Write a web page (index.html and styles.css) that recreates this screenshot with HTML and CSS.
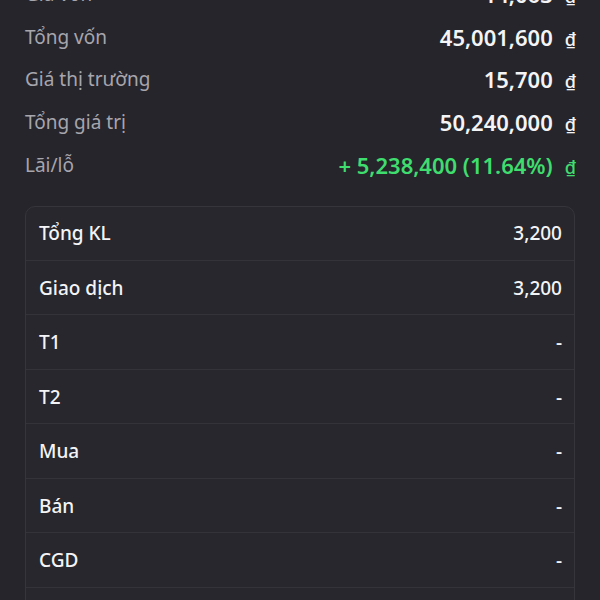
FILE: index.html
```html
<!DOCTYPE html>
<html lang="vi">
<head>
    <meta charset="UTF-8">
    <meta name="viewport" content="width=device-width, initial-scale=1.0">
    <title>Chi tiết vị thế</title>
    <link rel="stylesheet" href="styles.css">
</head>
<body>
    <!-- Summary -->
    <div class="summary">
        <div class="summary-row">
            <span class="label">Giá vốn</span>
            <span class="value">14,063<span class="cur">₫</span></span>
        </div>
        <div class="summary-row">
            <span class="label">Tổng vốn</span>
            <span class="value">45,001,600<span class="cur">₫</span></span>
        </div>
        <div class="summary-row">
            <span class="label">Giá thị trường</span>
            <span class="value">15,700<span class="cur">₫</span></span>
        </div>
        <div class="summary-row">
            <span class="label">Tổng giá trị</span>
            <span class="value">50,240,000<span class="cur">₫</span></span>
        </div>
        <div class="summary-row">
            <span class="label">Lãi/lỗ</span>
            <span class="value up">+ 5,238,400 (11.64%)<span class="cur">₫</span></span>
        </div>
    </div>

    <!-- Volume breakdown -->
    <div class="detail-card">
        <div class="detail-row"><span>Tổng KL</span><span>3,200</span></div>
        <div class="detail-row"><span>Giao dịch</span><span>3,200</span></div>
        <div class="detail-row"><span>T1</span><span>-</span></div>
        <div class="detail-row"><span>T2</span><span>-</span></div>
        <div class="detail-row"><span>Mua</span><span>-</span></div>
        <div class="detail-row"><span>Bán</span><span>-</span></div>
        <div class="detail-row"><span>CGD</span><span>-</span></div>
        <div class="detail-row"><span>Phong tỏa</span><span>-</span></div>
    </div>
</body>
</html>
```

FILE: styles.css
```css
/* General */
body {
    margin: 0;
    background: #26252c;
    font-family: "Noto Sans", "Open Sans", sans-serif;
    color: #f2f2f4;
}

/* Summary rows */
.summary {
    margin-top: -27px;
    padding: 0 24px 0 25px;
}

.summary-row {
    display: flex;
    justify-content: space-between;
    align-items: center;
    height: 42.6px;
}

.summary-row .label {
    font-size: 19px;
    color: #a6a6ac;
}

.summary-row .value {
    font-size: 22px;
    font-weight: 600;
    color: #f4f4f6;
}

.summary-row .value.up {
    color: #3fdc6e;
}

.summary-row .cur {
    display: inline-block;
    margin-left: 12px;
    font-size: 18px;
    font-weight: 500;
}

/* Detail card */
.detail-card {
    margin: 20px 25px 0;
    border: 1px solid #36353c;
    border-radius: 10px;
    background: #28272e;
}

.detail-row {
    display: flex;
    justify-content: space-between;
    align-items: center;
    height: 53.5px;
    padding: 0 12px 0 13px;
    border-bottom: 1px solid #34333a;
    font-size: 19px;
    font-weight: 500;
    color: #f4f4f6;
}

.detail-row:first-child {
    height: 53px;
}

.detail-row:last-child {
    border-bottom: none;
}
```
